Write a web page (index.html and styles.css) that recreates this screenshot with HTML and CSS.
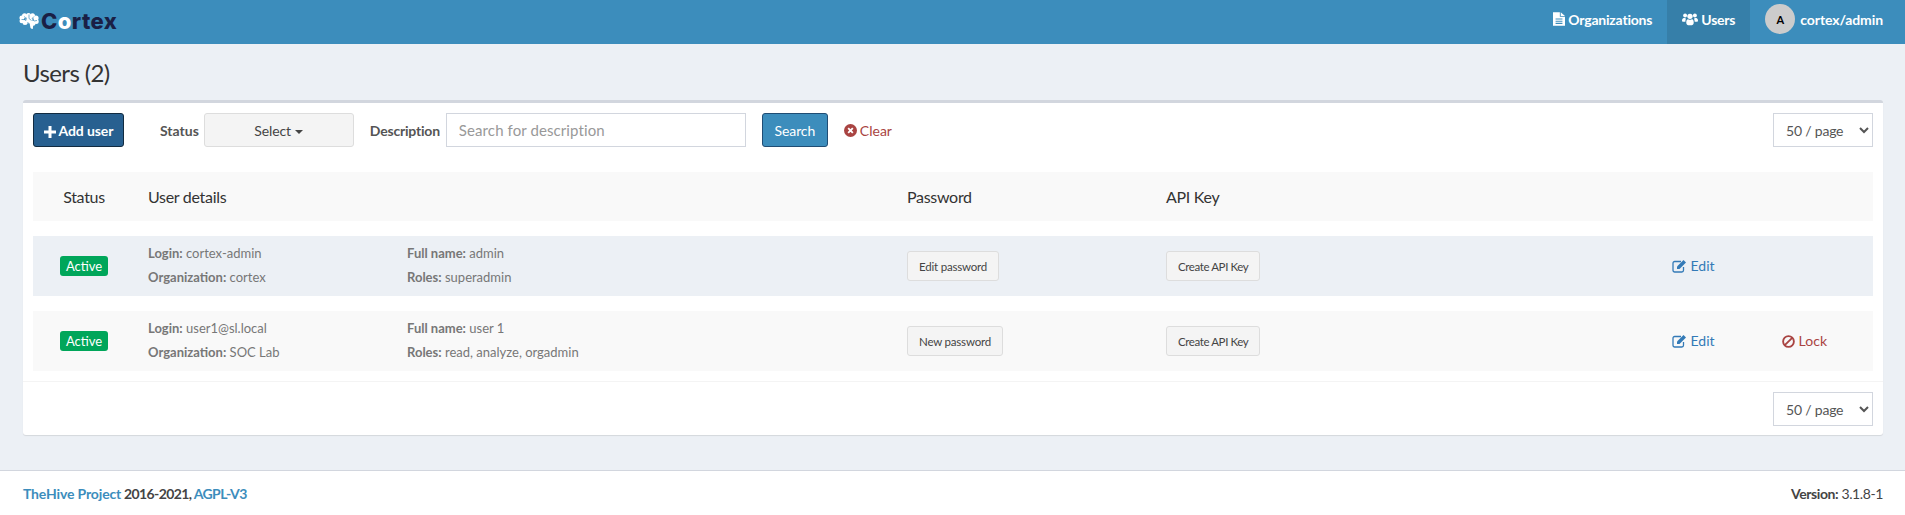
FILE: index.html
```html
<!DOCTYPE html>
<html lang="en">
<head>
    <meta charset="UTF-8">
    <title>Cortex - Users</title>
    <link rel="stylesheet" href="styles.css">
</head>
<body>
    <header class="topbar">
        <a class="logo" href="#">
            <svg class="logo-brain" viewBox="0 0 20 16" width="20" height="16">
                <g fill="#fff">
                    <circle cx="2.800" cy="5" r="2.400"/>
                    <circle cx="5.500" cy="2.800" r="2.500"/>
                    <circle cx="9.500" cy="2.500" r="2.500"/>
                    <circle cx="13.500" cy="2.800" r="2.500"/>
                    <circle cx="17" cy="5" r="2.600"/>
                    <circle cx="2.800" cy="8" r="2.300"/>
                    <circle cx="17.200" cy="8.500" r="2.500"/>
                    <circle cx="6" cy="9.500" r="2.500"/>
                    <circle cx="10" cy="7" r="3.500"/>
                    <circle cx="14" cy="10.300" r="2.500"/>
                    <path d="M10.500 10H14.500L13.800 15.400C13.700 16 13 16.100 12.500 15.800L11.500 15Z"/>
                </g>
                <path fill="none" stroke="#3c8dbc" stroke-width=".7" d="M5 3.500 7.500 5.500 6.500 8M10 1.500V5.500L12.500 7.500M15 3.500 13 5.500M2.500 6.500H5.500M15 8 18 7.500M8.500 9 10.500 11.500"/>
            </svg>
            <span class="logo-text">C<span class="logo-o">o</span>rtex</span>
        </a>
        <nav class="topnav">
            <a class="nav-item" href="#">
                <svg class="icon" viewBox="0 0 14 16" width="12" height="14">
                    <path fill="#fff" d="M0 0H8V5.500H14V16H0ZM9 0 14 4.500H9ZM3 7.500V8.700H11V7.500ZM3 10V11.200H11V10ZM3 12.500V13.700H11V12.500Z" fill-rule="evenodd"/>
                </svg>
                Organizations
            </a>
            <a class="nav-item nav-active" href="#">
                <svg class="icon" viewBox="0 0 18 14" width="16" height="14">
                    <circle cx="3.500" cy="3" r="2.200" fill="#fff"/>
                    <circle cx="14.500" cy="3" r="2.200" fill="#fff"/>
                    <circle cx="9" cy="4" r="3" fill="#fff"/>
                    <path fill="#fff" d="M0 9C0 6.500 1.500 6 3 6 3.500 6 4 6.500 4.500 6.800 4 7.500 3.800 8.500 3.800 10H1C.4 10 0 9.600 0 9ZM18 9C18 6.500 16.500 6 15 6 14.500 6 14 6.500 13.500 6.800 14 7.500 14.200 8.500 14.200 10H17C17.600 10 18 9.600 18 9ZM4.800 11C4.800 8.500 5.500 7 7 7.200 8 8 10 8 11 7.200 12.500 7 13.200 8.500 13.200 11 13.200 13 12 14 11 14H7C6 14 4.800 13 4.800 11Z"/>
                </svg>
                Users
            </a>
            <a class="nav-user" href="#">
                <span class="avatar">A</span>
                cortex/admin
            </a>
        </nav>
    </header>

    <main class="content">
        <h1 class="page-title">Users (2)</h1>

        <section class="box">
            <div class="toolbar">
                <button class="btn btn-add" type="button">
                    <svg class="icon" viewBox="0 0 12 12" width="12" height="12">
                        <path fill="#fff" d="M4.500 0H7.500V4.500H12V7.500H7.500V12H4.500V7.500H0V4.500H4.500Z"/>
                    </svg>
                    Add user
                </button>
                <label class="filter-label filter-status">Status</label>
                <button class="btn btn-select" type="button">Select <span class="caret"></span></button>
                <label class="filter-label filter-desc">Description</label>
                <input class="search-input" type="text" placeholder="Search for description">
                <button class="btn btn-search" type="button">Search</button>
                <a class="clear-link" href="#">
                    <svg class="icon" viewBox="0 0 14 14" width="13" height="13">
                        <circle cx="7" cy="7" r="7" fill="#a94442"/>
                        <path stroke="#fff" stroke-width="2" d="M4.500 4.500 9.500 9.500M9.500 4.500 4.500 9.500"/>
                    </svg>
                    <span>Clear</span>
                </a>
                <select class="page-size page-size-top">
                    <option>50 / page</option>
                </select>
            </div>

            <div class="row row-head">
                <div class="cell-status">Status</div>
                <div>User details</div>
                <div></div>
                <div>Password</div>
                <div>API Key</div>
                <div></div>
                <div></div>
            </div>

            <div class="row row-user row-first">
                <div class="cell-status"><span class="badge">Active</span></div>
                <div class="details">
                    <div><b>Login:</b> cortex-admin</div>
                    <div><b>Organization:</b> cortex</div>
                </div>
                <div class="details">
                    <div><b>Full name:</b> admin</div>
                    <div><b>Roles:</b> superadmin</div>
                </div>
                <div><button class="btn btn-small" type="button">Edit password</button></div>
                <div><button class="btn btn-small btn-key" type="button">Create API Key</button></div>
                <div>
                    <a class="action-edit" href="#">
                        <svg class="icon" viewBox="0 0 15 14" width="15" height="14">
                            <path fill="none" stroke="currentColor" stroke-width="1.300" d="M11.500 8V11.300C11.500 12.300 10.800 13 9.800 13H2.700C1.700 13 1 12.300 1 11.300V4.200C1 3.200 1.700 2.500 2.700 2.500H9"/>
                            <path fill="currentColor" d="M5 7.500 11.500 1 14 3.500 7.500 10 5 10Z"/>
                        </svg>
                        Edit
                    </a>
                </div>
                <div></div>
            </div>

            <div class="row row-user">
                <div class="cell-status"><span class="badge">Active</span></div>
                <div class="details">
                    <div><b>Login:</b> user1@sl.local</div>
                    <div><b>Organization:</b> SOC Lab</div>
                </div>
                <div class="details">
                    <div><b>Full name:</b> user 1</div>
                    <div><b>Roles:</b> read, analyze, orgadmin</div>
                </div>
                <div><button class="btn btn-small" type="button">New password</button></div>
                <div><button class="btn btn-small btn-key" type="button">Create API Key</button></div>
                <div>
                    <a class="action-edit" href="#">
                        <svg class="icon" viewBox="0 0 15 14" width="15" height="14">
                            <path fill="none" stroke="currentColor" stroke-width="1.300" d="M11.500 8V11.300C11.500 12.300 10.800 13 9.800 13H2.700C1.700 13 1 12.300 1 11.300V4.200C1 3.200 1.700 2.500 2.700 2.500H9"/>
                            <path fill="currentColor" d="M5 7.500 11.500 1 14 3.500 7.500 10 5 10Z"/>
                        </svg>
                        Edit
                    </a>
                </div>
                <div>
                    <a class="action-lock" href="#">
                        <svg class="icon" viewBox="0 0 14 14" width="13" height="13">
                            <circle cx="7" cy="7" r="5.800" fill="none" stroke="currentColor" stroke-width="2"/>
                            <path stroke="currentColor" stroke-width="2" d="M3 11 11 3"/>
                        </svg>
                        Lock
                    </a>
                </div>
            </div>

            <div class="box-footer">
                <select class="page-size">
                    <option>50 / page</option>
                </select>
            </div>
        </section>
    </main>

    <footer class="footer">
        <div class="footer-left"><a class="footer-brand" href="#">TheHive Project</a> 2016-2021, <a href="#">AGPL-V3</a></div>
        <div class="footer-version"><b>Version:</b> 3.1.8-1</div>
    </footer>
</body>
</html>
```

FILE: styles.css
```css
* {
    box-sizing: border-box;
}
html, body {
    height: 100%;
}
body {
    margin: 0;
    display: flex;
    flex-direction: column;
    font-family: Lato, "Open Sans", sans-serif;
    font-size: 14px;
    color: #333;
    background: #ecf0f5;
}
a {
    text-decoration: none;
}
.icon {
    vertical-align: -2px;
}

/* top bar */
.topbar {
    flex: none;
    height: 44px;
    display: flex;
    justify-content: space-between;
    background: #3c8dbc;
}
.logo {
    display: flex;
    align-items: center;
    padding: 0 0 2px 19px;
}
.logo-brain {
    margin-right: 2px;
}
.logo-text {
    font-family: Inter, sans-serif;
    font-weight: 800;
    font-size: 22px;
    letter-spacing: 0.4px;
    color: #1a1f45;
}
.logo-o {
    color: #fff;
}
.topnav {
    display: flex;
    align-items: stretch;
    padding-right: 22px;
}
.nav-item, .nav-user {
    display: flex;
    align-items: center;
    gap: 3px;
    padding: 0 15px 6px;
    color: #fff;
    font-weight: 700;
    letter-spacing: -0.2px;
}
.nav-active {
    background: #367fa9;
}
.nav-user {
    gap: 5px;
    padding-right: 0;
    letter-spacing: -0.1px;
}
.avatar {
    width: 30px;
    height: 30px;
    border-radius: 50%;
    display: flex;
    align-items: center;
    justify-content: center;
    background: #ccc;
    color: #000;
    font-size: 11px;
    font-weight: 700;
}

/* content */
.content {
    flex: 1;
    padding: 0 22px 0 23px;
}
.page-title {
    margin: 0;
    height: 56px;
    padding-top: 14px;
    font-size: 24px;
    line-height: 30px;
    font-weight: 400;
    letter-spacing: -0.6px;
}
.box {
    height: 335px;
    padding: 10px 10px 0;
    background: #fff;
    border-top: 3px solid #d2d6de;
    border-radius: 3px;
    box-shadow: 0 1px 1px rgba(0, 0, 0, 0.1);
}
.toolbar {
    display: flex;
    align-items: center;
    height: 34px;
}

/* buttons */
.btn {
    height: 34px;
    padding: 0;
    font-family: inherit;
    font-size: 14px;
    letter-spacing: -0.1px;
    border-radius: 3px;
    border: 1px solid #ddd;
    background: #f4f4f4;
    color: #444;
}
.btn-add {
    width: 91px;
    background: #286090;
    border-color: #122b40;
    color: #fff;
    font-weight: 700;
}
.btn-select {
    width: 150px;
}
.btn-search {
    width: 66px;
    margin-left: 16px;
    background: #3c8dbc;
    border-color: #204d74;
    color: #fff;
}
.btn-small {
    height: 30px;
    padding: 0 11px;
    font-size: 11.500px;
    letter-spacing: -0.2px;
}
.btn-key {
    letter-spacing: -0.4px;
}
.caret {
    display: inline-block;
    margin-left: 1px;
    vertical-align: middle;
    border-top: 4px solid #444;
    border-left: 4px solid transparent;
    border-right: 4px solid transparent;
}

/* filters */
.filter-label {
    font-weight: 700;
    color: #555;
    margin-right: 5px;
}
.filter-status {
    margin-left: 36px;
}
.filter-desc {
    width: 71px;
    margin-left: 16px;
    letter-spacing: -0.2px;
}
.search-input {
    width: 300px;
    height: 34px;
    padding: 6px 12px;
    border: 1px solid #d2d6de;
    font-family: inherit;
    font-size: 14px;
    color: #555;
}
.search-input::placeholder {
    color: #999;
    font-size: 15px;
    letter-spacing: 0.1px;
}
.clear-link {
    display: flex;
    align-items: center;
    gap: 3px;
    margin-left: 16px;
    color: #a94442;
}
.page-size {
    width: 100px;
    height: 34px;
    padding: 6px 0 6px 8px;
    background: #fff;
    border: 1px solid #d2d6de;
    border-radius: 0;
    font-family: inherit;
    font-size: 14px;
    letter-spacing: -0.2px;
    color: #555;
}
.page-size-top {
    margin-left: auto;
}

/* table rows */
.row {
    display: grid;
    grid-template-columns: 115px 259px 500px 259px 506px 110px 91px;
    align-items: center;
}
.row-head {
    height: 49px;
    margin-top: 25px;
    background: #f9f9f9;
    font-size: 16px;
    letter-spacing: -0.3px;
    color: #333;
}
.row-user {
    height: 60px;
    margin-top: 15px;
    background: #f9f9f9;
}
.row-first {
    background: #ecf0f5;
}
.cell-status {
    padding-right: 13px;
    text-align: center;
}
.badge {
    display: inline-block;
    width: 48px;
    height: 20px;
    line-height: 20px;
    border-radius: 3px;
    background: #00a65a;
    color: #fff;
    font-size: 13px;
    letter-spacing: 0;
    text-align: center;
}
.details {
    padding-bottom: 2px;
    color: #777;
    font-size: 13px;
    line-height: 24px;
}
.action-edit, .action-lock {
    display: block;
    padding-bottom: 2px;
}
.action-edit {
    color: #337ab7;
}
.action-lock {
    color: #a94442;
}
.box-footer {
    display: flex;
    justify-content: flex-end;
    height: 55px;
    margin: 10px -10px 0;
    padding: 10px 10px 0;
    border-top: 1px solid #f4f4f4;
}

/* footer */
.footer {
    flex: none;
    height: 45px;
    display: flex;
    justify-content: space-between;
    align-items: center;
    padding: 0 22px 0 23px;
    background: #fff;
    border-top: 1px solid #d2d6de;
    color: #444;
}
.footer a {
    color: #3c8dbc;
}
.footer-left {
    font-weight: 700;
    letter-spacing: -0.6px;
}
.footer-left .footer-brand {
    letter-spacing: -0.15px;
}
.footer-version {
    letter-spacing: -0.4px;
}
```
